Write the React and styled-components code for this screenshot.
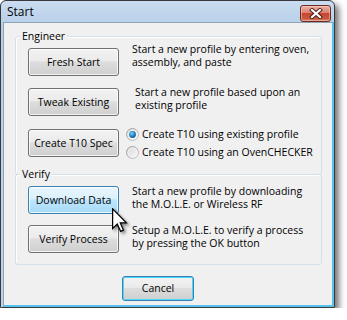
import React from 'react';
import styled, { createGlobalStyle } from 'styled-components';

const Global = createGlobalStyle`
  body {
    margin: 0;
    background: #fff;
    font-family: "Open Sans", "Noto Sans", sans-serif;
  }
`;

const Window = styled.div`
  position: relative;
  width: 335px;
  height: 308px;
  box-sizing: border-box;
  border: 1px solid #3a3a3a;
  border-radius: 6px 6px 0 0;
  background: linear-gradient(#cadcf0, #b9d0ea 22px, #bcd3ec);
  box-shadow: 4px 4px 6px rgba(0, 0, 0, 0.55);
  display: flex;
  flex-direction: column;
`;

const TitleBar = styled.div`
  height: 21px;
  flex: none;
  display: flex;
  justify-content: space-between;
  padding: 0 3px 0 6px;
`;

const Title = styled.span`
  font-size: 12px;
  line-height: 21px;
  color: #000;
`;

const CloseBtn = styled.div`
  width: 29px;
  height: 15px;
  margin-top: 4px;
  border: 1px solid #6e2a22;
  border-radius: 3px;
  background: linear-gradient(#eab1a5, #d98270 45%, #c9452f 50%, #c85a40 85%, #dc8a6e);
  box-shadow: inset 0 0 0 1px rgba(255, 220, 210, 0.45);
  display: flex;
  align-items: center;
  justify-content: center;
`;

const Client = styled.div`
  flex: 1;
  margin-left: 2px;
  background: #f0f0f0;
  border-left: 1px solid #8fa3b8;
  border-top: 1px solid #8fa3b8;
  border-right: 2px solid #58c2ee;
  border-bottom: 2px solid #58c2ee;
  padding: 0 10px 0 11px;
  display: flex;
  flex-direction: column;
`;

const Group = styled.fieldset`
  margin: ${(p) => p.$mt}px 0 0;
  padding: ${(p) => p.$pt}px 0 ${(p) => p.$pb}px 12px;
  border: 1px solid #d5dfe5;
  border-radius: 3px;
  box-shadow: inset 1px 1px 0 #fff;
  min-width: 0;
`;

const Legend = styled.legend`
  position: relative;
  margin-left: -8px;
  padding: 0 2px;
  font-size: 10.5px;
  line-height: 13px;
  background: #f0f0f0;
  color: #000;
`;

const Row = styled.div`
  display: flex;
  align-items: flex-start;
  gap: ${(p) => p.$gap ?? 13}px;
  margin-top: ${(p) => p.$mt ?? 0}px;
`;

const Button = styled.button`
  flex: none;
  width: ${(p) => p.$w ?? 91}px;
  height: ${(p) => p.$h ?? 28}px;
  padding: 0;
  font: 10.5px/13px "Open Sans", "Noto Sans", sans-serif;
  color: #000;
  white-space: nowrap;
  border: 1px solid ${(p) => (p.$hover || p.$default ? '#3c7fb1' : '#707070')};
  border-radius: 3px;
  background: ${(p) =>
    p.$hover
      ? 'linear-gradient(#eaf6fd, #d9f0fc 45%, #bee6fd 50%, #a7d9f5)'
      : 'linear-gradient(#f2f2f2, #ebebeb 45%, #dddddd 50%, #cfcfcf)'};
  box-shadow: inset 0 0 0 1px ${(p) => (p.$default ? '#48d8fb' : 'rgba(255,255,255,0.75)')};
`;

const Desc = styled.div`
  font-size: 10.5px;
  line-height: 13px;
  color: #000;
  white-space: nowrap;
  margin-top: ${(p) => p.$shift ?? 0}px;
`;

const Radios = styled.div`
  display: flex;
  flex-direction: column;
  margin-top: -4px;
`;

const RadioItem = styled.label`
  height: 18px;
  display: flex;
  align-items: center;
  gap: 3px;
  font-size: 10.5px;
  white-space: nowrap;
  color: #000;
`;

const Footer = styled.div`
  display: flex;
  padding: 11px 0 0 107px;
`;

const Cursor = styled.svg`
  position: absolute;
  left: 111px;
  top: 207px;
  filter: drop-shadow(2px 2px 1.5px rgba(0, 0, 0, 0.45));
`;

const Radio = ({ checked, id }) => (
  <svg width="13" height="13" viewBox="0 0 13 13">
    <defs>
      <linearGradient id={`ro${id}`} x1="0" y1="0" x2="1" y2="1">
        <stop offset="0" stopColor="#9a9a9a" />
        <stop offset="1" stopColor="#c8c8c8" />
      </linearGradient>
      <linearGradient id={`rf${id}`} x1="0" y1="0" x2="1" y2="1">
        <stop offset="0" stopColor="#d6d6d6" />
        <stop offset="1" stopColor="#fbfbfb" />
      </linearGradient>
      <radialGradient id={`rd${id}`} cx="0.4" cy="0.35" r="0.7">
        <stop offset="0" stopColor="#8fd4f7" />
        <stop offset="0.5" stopColor="#2a8fd0" />
        <stop offset="1" stopColor="#0b4f8a" />
      </radialGradient>
    </defs>
    <circle cx="6.5" cy="6.5" r="6" fill={`url(#rf${id})`} stroke={`url(#ro${id})`} />
    <circle cx="6.5" cy="6.5" r="4.3" fill="none" stroke="#f4f4f4" strokeWidth="0.8" />
    {checked && <circle cx="6.5" cy="6.5" r="3.4" fill={`url(#rd${id})`} />}
  </svg>
);

export default function App() {
  return (
    <>
      <Global />
      <Window>
        <TitleBar>
          <Title>Start</Title>
          <CloseBtn>
            <svg width="14" height="11" viewBox="0 0 14 11">
              <path d="M3 2 L11 9 M11 2 L3 9" stroke="#4a1c16" strokeWidth="4" strokeLinecap="square" />
              <path d="M3 2 L11 9 M11 2 L3 9" stroke="#fff" strokeWidth="2.2" strokeLinecap="square" />
            </svg>
          </CloseBtn>
        </TitleBar>
        <Client>
          <Group $mt={7} $pt={5} $pb={13}>
            <Legend>Engineer</Legend>
            <Row>
              <Button>Fresh Start</Button>
              <Desc $shift={-5}>
                Start a new profile by entering oven,
                <br />
                assembly, and paste
              </Desc>
            </Row>
            <Row $mt={12} $gap={16}>
              <Button>Tweak Existing</Button>
              <Desc $shift={-2}>
                Start a new profile based upon an
                <br />
                existing profile
              </Desc>
            </Row>
            <Row $mt={13} $gap={7}>
              <Button>Create T10 Spec</Button>
              <Radios>
                <RadioItem>
                  <Radio id="a" checked />
                  Create T10 using existing profile
                </RadioItem>
                <RadioItem>
                  <Radio id="b" />
                  Create T10 using an OvenCHECKER
                </RadioItem>
              </Radios>
            </Row>
          </Group>
          <Group $mt={-7} $pt={5} $pb={11}>
            <Legend>Verify</Legend>
            <Row>
              <Button $hover>Download Data</Button>
              <Desc $shift={-1}>
                Start a new profile by downloading
                <br />
                the M.O.L.E. or Wireless RF
              </Desc>
            </Row>
            <Row $mt={11}>
              <Button>Verify Process</Button>
              <Desc $shift={-1}>
                Setup a M.O.L.E. to verify a process
                <br />
                by pressing the OK button
              </Desc>
            </Row>
          </Group>
          <Footer>
            <Button $default $w={72} $h={25}>
              Cancel
            </Button>
          </Footer>
        </Client>
        <Cursor width="16" height="25" viewBox="0 0 13 20">
          <path
            d="M0.5 0.5 L0.5 16.5 L4.3 12.8 L7 18.8 L9.3 17.8 L6.7 11.9 L11.7 11.9 Z"
            fill="#fff"
            stroke="#000"
            strokeWidth="1"
            strokeLinejoin="miter"
          />
        </Cursor>
      </Window>
    </>
  );
}
